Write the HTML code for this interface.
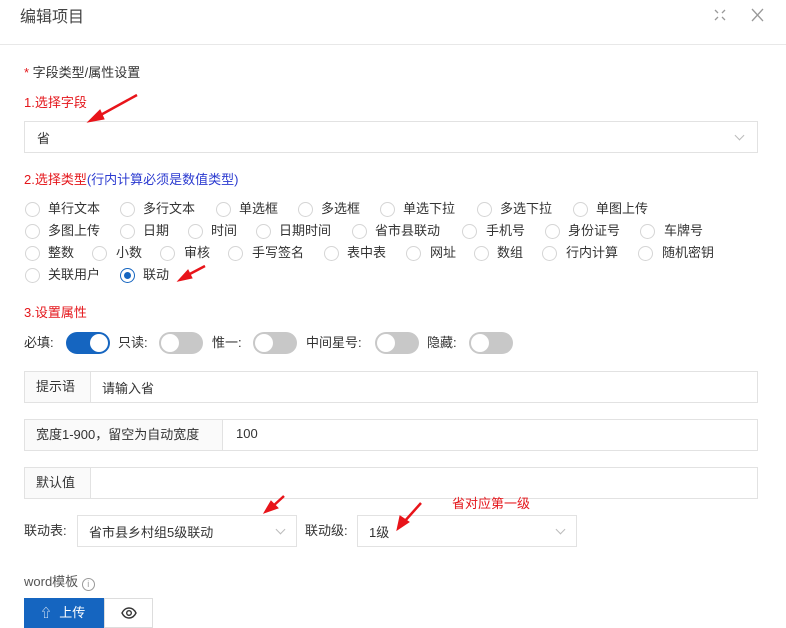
<!DOCTYPE html>
<html><head><meta charset="utf-8"><style>
*{box-sizing:border-box;margin:0;padding:0}
body{width:786px;height:622px;overflow:hidden;background:#fff;font-family:"Liberation Sans","Noto Sans CJK SC",sans-serif;font-size:13px;color:#333;position:relative}
.a{position:absolute;white-space:nowrap}
.r{position:absolute;width:15px;height:15px;border:1px solid #d5d5d5;border-radius:50%;background:#fff}
.rt{position:absolute;line-height:16px}
.box{position:absolute;border:1px solid #e2e2e2;background:#fff}
.add{position:absolute;left:0;top:0;bottom:0;background:#fafafa;border-right:1px solid #e2e2e2;line-height:30px;padding-left:11px}
.sw{position:absolute;width:44px;height:22px;border-radius:11px;background:#c8c8c8}
.sw i{position:absolute;top:2px;left:2px;width:18px;height:18px;border-radius:50%;background:#fff}
.chev{position:absolute;width:7px;height:7px;border-right:1px solid #bbb;border-bottom:1px solid #bbb;transform:rotate(45deg)}
.red{color:#e4161b}
</style></head><body>
<div class="a" style="left:20px;top:7px;font-size:16px;color:#444;line-height:22px">编辑项目</div>
<svg class="a" style="left:713px;top:8px" width="14" height="14" viewBox="0 0 14 14" fill="none" stroke="#999" stroke-width="1.3"><path d="M2 2l3 3M12 2l-3 3M2 12l3-3M12 12l-3-3"/></svg>
<svg class="a" style="left:751px;top:8px" width="13" height="14" viewBox="0 0 13 14" fill="none" stroke="#999" stroke-width="1.3"><path d="M1 1l11 12M12 1L1 13"/></svg>
<div class="a" style="left:0;top:44px;width:786px;height:1px;background:#e8e8e8"></div>

<div class="a" style="left:24px;top:65px;line-height:16px"><span class="red">* </span>字段类型/属性设置</div>
<div class="a red" style="left:24px;top:95px;line-height:16px">1.选择字段</div>
<div class="box" style="left:24px;top:121px;width:734px;height:32px"><span class="a" style="left:12px;top:6px">省</span><span class="chev" style="right:14px;top:10px"></span></div>
<div class="a" style="left:24px;top:172px;line-height:16px"><span class="red">2.选择类型</span><span style="color:#2c3bd0">(行内计算必须是数值类型)</span></div>

<div class="r" style="left:25px;top:202px"></div><div class="rt" style="left:48px;top:201px">单行文本</div>
<div class="r" style="left:120px;top:202px"></div><div class="rt" style="left:143px;top:201px">多行文本</div>
<div class="r" style="left:216px;top:202px"></div><div class="rt" style="left:239px;top:201px">单选框</div>
<div class="r" style="left:298px;top:202px"></div><div class="rt" style="left:321px;top:201px">多选框</div>
<div class="r" style="left:380px;top:202px"></div><div class="rt" style="left:403px;top:201px">单选下拉</div>
<div class="r" style="left:477px;top:202px"></div><div class="rt" style="left:500px;top:201px">多选下拉</div>
<div class="r" style="left:573px;top:202px"></div><div class="rt" style="left:596px;top:201px">单图上传</div>
<div class="r" style="left:25px;top:224px"></div><div class="rt" style="left:48px;top:223px">多图上传</div>
<div class="r" style="left:120px;top:224px"></div><div class="rt" style="left:143px;top:223px">日期</div>
<div class="r" style="left:188px;top:224px"></div><div class="rt" style="left:211px;top:223px">时间</div>
<div class="r" style="left:256px;top:224px"></div><div class="rt" style="left:279px;top:223px">日期时间</div>
<div class="r" style="left:352px;top:224px"></div><div class="rt" style="left:375px;top:223px">省市县联动</div>
<div class="r" style="left:462px;top:224px"></div><div class="rt" style="left:486px;top:223px">手机号</div>
<div class="r" style="left:545px;top:224px"></div><div class="rt" style="left:568px;top:223px">身份证号</div>
<div class="r" style="left:640px;top:224px"></div><div class="rt" style="left:664px;top:223px">车牌号</div>
<div class="r" style="left:25px;top:246px"></div><div class="rt" style="left:48px;top:245px">整数</div>
<div class="r" style="left:92px;top:246px"></div><div class="rt" style="left:116px;top:245px">小数</div>
<div class="r" style="left:160px;top:246px"></div><div class="rt" style="left:184px;top:245px">审核</div>
<div class="r" style="left:228px;top:246px"></div><div class="rt" style="left:252px;top:245px">手写签名</div>
<div class="r" style="left:324px;top:246px"></div><div class="rt" style="left:347px;top:245px">表中表</div>
<div class="r" style="left:406px;top:246px"></div><div class="rt" style="left:430px;top:245px">网址</div>
<div class="r" style="left:474px;top:246px"></div><div class="rt" style="left:497px;top:245px">数组</div>
<div class="r" style="left:542px;top:246px"></div><div class="rt" style="left:566px;top:245px">行内计算</div>
<div class="r" style="left:638px;top:246px"></div><div class="rt" style="left:662px;top:245px">随机密钥</div>
<div class="r" style="left:25px;top:268px"></div><div class="rt" style="left:48px;top:267px">关联用户</div>
<div class="r" style="left:120px;top:268px;border-color:#1565c0"><i style="position:absolute;left:3px;top:3px;width:7px;height:7px;border-radius:50%;background:#1565c0"></i></div><div class="rt" style="left:143px;top:267px">联动</div>

<div class="a red" style="left:24px;top:305px;line-height:16px">3.设置属性</div>
<div class="a" style="left:24px;top:335px;line-height:16px">必填:</div>
<div class="sw" style="left:66px;top:332px;background:#1565c0"><i style="left:24px"></i></div>
<div class="a" style="left:118px;top:335px;line-height:16px">只读:</div>
<div class="sw" style="left:159px;top:332px"><i></i></div>
<div class="a" style="left:212px;top:335px;line-height:16px">惟一:</div>
<div class="sw" style="left:253px;top:332px"><i></i></div>
<div class="a" style="left:306px;top:335px;line-height:16px">中间星号:</div>
<div class="sw" style="left:375px;top:332px"><i></i></div>
<div class="a" style="left:427px;top:335px;line-height:16px">隐藏:</div>
<div class="sw" style="left:469px;top:332px"><i></i></div>

<div class="box" style="left:24px;top:371px;width:734px;height:32px"><div class="add" style="width:66px">提示语</div><span class="a" style="left:77px;top:6px">请输入省</span></div>
<div class="box" style="left:24px;top:419px;width:734px;height:32px"><div class="add" style="width:198px">宽度1-900，留空为自动宽度</div><span class="a" style="left:211px;top:6px">100</span></div>
<div class="box" style="left:24px;top:467px;width:734px;height:32px"><div class="add" style="width:66px">默认值</div></div>

<div class="a" style="left:24px;top:523px;line-height:16px">联动表:</div>
<div class="box" style="left:77px;top:515px;width:220px;height:32px"><span class="a" style="left:11px;top:6px">省市县乡村组5级联动</span><span class="chev" style="right:12px;top:10px"></span></div>
<div class="a" style="left:305px;top:523px;line-height:16px">联动级:</div>
<div class="box" style="left:357px;top:515px;width:220px;height:32px"><span class="a" style="left:11px;top:6px">1级</span><span class="chev" style="right:12px;top:10px"></span></div>
<div class="a red" style="left:452px;top:496px;line-height:16px">省对应第一级</div>

<div class="a" style="left:24px;top:574px;line-height:16px;color:#555">word模板 <span style="display:inline-block;width:13px;height:13px;border:1px solid #999;border-radius:50%;font-size:9px;line-height:11px;text-align:center;color:#999;vertical-align:-1px">i</span></div>
<div class="a" style="left:24px;top:598px;width:81px;height:30px;background:#1565c0;color:#fff;line-height:30px;padding-left:16px"><span style="font-size:12px">⇧</span>&nbsp; 上传</div>
<div class="a" style="left:104px;top:598px;width:49px;height:30px;border:1px solid #ddd;text-align:center"><svg width="16" height="12" viewBox="0 0 16 12" style="margin-top:8px" fill="none" stroke="#333" stroke-width="1.4"><path d="M1 6C3 2 6 1 8 1s5 1 7 5c-2 4-5 5-7 5S3 10 1 6z"/><circle cx="8" cy="6" r="2.3"/></svg></div>

<svg class="a" style="left:0;top:0" width="786" height="622" viewBox="0 0 786 622">
<g stroke="#e8141a" stroke-width="2.5" fill="#e8141a">
<line x1="137" y1="95" x2="97" y2="117"/><polygon points="88,122 100,110 104,119" stroke-width="1"/>
<line x1="205" y1="266" x2="186" y2="276"/><polygon points="178,281 188,270 192,278" stroke-width="1"/>
<line x1="284" y1="496" x2="272" y2="507"/><polygon points="264,513 271,501 278,508" stroke-width="1"/>
<line x1="421" y1="503" x2="404" y2="522"/><polygon points="397,530 400,516 409,522" stroke-width="1"/>
</g></svg>
</body></html>
